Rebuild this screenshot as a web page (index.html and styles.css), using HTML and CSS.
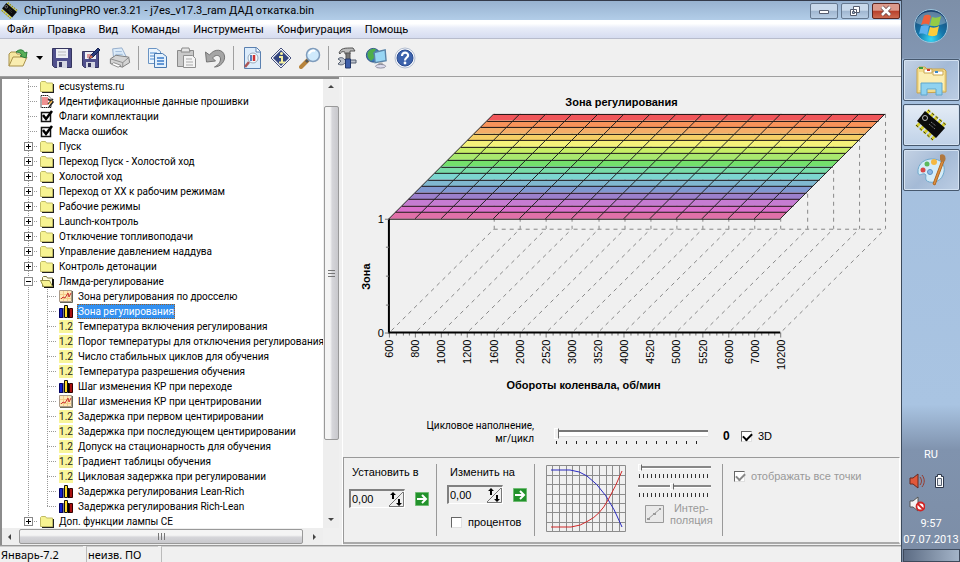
FILE: index.html
```html
<!DOCTYPE html>
<html lang="ru">
<head>
  <meta charset="UTF-8" />
  <meta name="viewport" content="width=device-width, initial-scale=1" />
  <title>ChipTuningPRO ver.3.21</title>
  <link rel="stylesheet" href="styles.css">
</head>
<body>

<svg class="sprite" aria-hidden="true">
  <symbol id="chip" viewBox="0 0 32 32">
    <path d="M12 2l18 15M2 15l17 15" stroke="#d8d02c" stroke-width="5" stroke-dasharray="3 2"/>
    <path d="M13 1l18 15M1 16l17 15" stroke="#333" stroke-width="1" stroke-dasharray="3 2"/>
    <path d="M10 2l20 17-9 10L2 12z" fill="#0b0b0b"/>
    <circle cx="10" cy="9" r="2.500" fill="none" stroke="#bbb"/>
    <path d="M14 15l6 5M16 13l5 4" stroke="#777" stroke-dasharray="2 1"/>
  </symbol>
  <symbol id="folder" viewBox="0 0 14 13">
    <path d="M2 12h12V4" fill="none" stroke="#222" stroke-width="2"/>
    <path d="M.5 11.500v-9l1-1h4l1 1.500h6v8.500z" fill="#f7f392" stroke="#c0bb66"/>
  </symbol>
  <symbol id="folder-open" viewBox="0 0 14 13">
    <path d="M2.500 11.500v-9l1-1h3l1 1.500h5v8.500z" fill="#fffde0" stroke="#77733a"/>
    <path d="M13 4v8.500H4" fill="none" stroke="#111" stroke-width="2"/>
    <path d="M.5 5.500h9l3 6h-9z" fill="#f7f392" stroke="#99944a"/>
  </symbol>
  <symbol id="note" viewBox="0 0 14 13">
    <path d="M1 .5h7l3 3v9H1z" fill="#fff" stroke="#222" stroke-dasharray="1.500 .5"/>
    <path d="M2 3h6M2 5h7M2 7h6M2 9h6" stroke="#d22"/>
    <path d="M8 9l5-5M8 4l5 3-4 5" fill="none" stroke="#222" stroke-width="1.500"/>
    <path d="M9 9l3-3" stroke="#fb4" stroke-width="1.500"/>
  </symbol>
  <symbol id="flag" viewBox="0 0 14 13">
    <path d="M1.500 2.500h9v9h-9z" fill="#fff" stroke="#111" stroke-width="1.500"/>
    <path d="M3 5l3 4 6-8" fill="none" stroke="#000" stroke-width="2.500"/>
  </symbol>
  <symbol id="curve" viewBox="0 0 14 13">
    <path d="M.5.5h12v11H.5z" fill="#fde9b8" stroke="#a98"/>
    <path d="M1 12.500h12.500V1" fill="none" stroke="#665" />
    <path d="M4.500 1v10M8.500 1v10M1 4.500h11M1 8.500h11" stroke="#f2cd8a"/>
    <path d="M2 9l2-2 2 1 3-5 1 4 2-4" fill="none" stroke="#c33"/>
  </symbol>
  <symbol id="bars" viewBox="0 0 14 13">
    <path d="M.5 5.500h3v7h-3zM9.500 4.500h3v8h-3z" fill="#14b" stroke="#001"/>
    <path d="M5.500.5h3v12h-3z" fill="#fd2" stroke="#111"/>
    <path d="M4 3v10M9.500 3v10" stroke="#000"/>
    <path d="M10.500 3.500h3v9h-3z" fill="#a11" stroke="#300"/>
    <path d="M.5 3.500h3v9h-3z" fill="#12c" stroke="#006"/>
  </symbol>
  <symbol id="go" viewBox="0 0 14 14">
    <path d="M.5.5h13v13H.5z" fill="#22922b" stroke="#6fbb72"/>
    <path d="M2 7h9M7 3l4 4-4 4" fill="none" stroke="#fff" stroke-width="2"/>
  </symbol>
  <symbol id="spin" viewBox="0 0 16 16">
    <path d="M1 15L15 1M15.500 1v14.500H1" fill="none" stroke="#777"/>
    <path d="M5 1l3 3H6v4H4V4H2zM11 15l-3-3h2V8h2v4h2z" fill="#000"/>
  </symbol>
</svg>

<div class="window">
  <header class="titlebar">
    <svg class="app-icon"><use href="#chip"/></svg>
    <h1>ChipTuningPRO ver.3.21 - j7es_v17.3_ram ДАД откатка.bin</h1>
    <div class="caption">
      <button aria-label="Свернуть"><svg viewBox="0 0 12 12"><path d="M1.500 5.500h9v3h-9z" fill="#fff" stroke="#555c6e"/></svg></button>
      <button aria-label="Восстановить"><svg viewBox="0 0 12 12"><path d="M4.500 1.500h6v6h-6zM1.500 4.500h6v6h-6z" fill="#fff" stroke="#555c6e"/><path d="M3.500 6.500h2v2h-2z" fill="#9db5d0" stroke="#555c6e"/></svg></button>
      <button class="close" aria-label="Закрыть"><svg viewBox="0 0 12 12"><path d="M2 2l8 8M10 2l-8 8" stroke="#6b4a4a" stroke-width="4"/><path d="M2 2l8 8M10 2l-8 8" stroke="#fff" stroke-width="2.500"/></svg></button>
    </div>
  </header>

  <nav class="menu">
    <a href="#">Файл</a>
    <a href="#">Правка</a>
    <a href="#">Вид</a>
    <a href="#">Команды</a>
    <a href="#">Инструменты</a>
    <a href="#">Конфигурация</a>
    <a href="#">Помощь</a>
  </nav>

  <div class="toolbar">
    <button aria-label="Открыть"><svg viewBox="0 0 22 22"><path d="M2 19V7l2-2h5l1 2h6v3" fill="#f5e7a0" stroke="#a8914a"/><path d="M2 19l4-9h14l-4 9z" fill="#f9edb0" stroke="#a8914a"/><path d="M9 5c3-3 7-3 9 1l2-1-1 6-6-2 2-1c-1-2-3-3-6-3z" fill="#58b058" stroke="#2c7c3c"/></svg></button>
    <button class="drop" aria-label="Последние файлы"><svg viewBox="0 0 8 22"><path d="M0 9h7l-3 4z" fill="#000"/></svg></button>
    <button aria-label="Сохранить"><svg viewBox="0 0 22 22"><path d="M1.500 1.500h19v19h-17l-2-2z" fill="#50508c" stroke="#35355f"/><path d="M5 2h12v9H5z" fill="#eef0f4"/><path d="M7 5h8M7 8h8" stroke="#bbb"/><path d="M6 14h10v7H6z" fill="#d5d7e2"/><path d="M8 15h3v5H8z" fill="#35355f"/></svg></button>
    <button aria-label="Сохранить как"><svg viewBox="0 0 22 22"><path d="M2.500 4.500h16v16h-14l-2-2z" fill="#50508c" stroke="#35355f"/><path d="M5 5h11v7H5z" fill="#eef0f4"/><path d="M7 8h7M7 10h6" stroke="#c44"/><path d="M6 15h9v6H6z" fill="#d5d7e2"/><path d="M8 16h3v4H8z" fill="#35355f"/><path d="M9 12l2-4 7-7 2 2-7 7z" fill="#2b3d7c" stroke="#152050"/><path d="M9 12l2-4 2 2z" fill="#e07050"/></svg></button>
    <button aria-label="Печать"><svg viewBox="0 0 24 24"><path d="M5 12L4 2l10-1 5 10z" fill="#dcecfa" stroke="#8fa9c8"/><path d="M7 5h7M7 8h8" stroke="#9db8d6"/><path d="M1.500 13l6-4 14 2 1 6-8 5-13-4z" fill="#d4d4d4" stroke="#777"/><path d="M2 13l13 4 7-6M15 17v5" fill="none" stroke="#888"/><path d="M5 17l8 3-3 2-7-3z" fill="#fff" stroke="#888"/></svg></button>
    <span class="sep"></span>
    <button aria-label="Копировать"><svg viewBox="0 0 22 22"><path d="M2.500 1.500h8l4 3v12h-12z" fill="#eaf4fd" stroke="#6a94c4"/><path d="M4 6h7M4 9h7M4 12h6" stroke="#4a8ad0"/><path d="M8.500 6.500h8l4 3v11h-12z" fill="#e2f0fc" stroke="#4878b0"/><path d="M11 11h7M11 14h7M11 17h7" stroke="#3a7ac8" stroke-width="1.500"/></svg></button>
    <button aria-label="Вставить"><svg viewBox="0 0 22 22"><path d="M2.500 3.500h16v16h-16z" fill="#c9c9c9" stroke="#8a8a8a"/><path d="M7 1h7l1 4H6z" fill="#e6e6e6" stroke="#888"/><path d="M8.500 8.500h9l3 3v9h-12z" fill="#f4f4f4" stroke="#909090"/><path d="M11 12h6M11 15h7M11 18h7" stroke="#aaa"/></svg></button>
    <button aria-label="Отменить"><svg viewBox="0 0 22 22"><path d="M1.500 5l1 10 9-1-3-3c3-4 8-3 8 1 0 3-2 6-6 8 6 0 11-6 10-11-1-7-10-8-15-1z" fill="#a5a5a5" stroke="#747474"/></svg></button>
    <span class="sep"></span>
    <button aria-label="Просмотр"><svg viewBox="0 0 22 22"><path d="M3.500.5h12l4 4v17h-16z" fill="#dcecfb" stroke="#5a80b0"/><path d="M15 1v4h4" fill="#fff" stroke="#5a80b0"/><circle cx="12" cy="11" r="5" fill="#f4fbff" stroke="#9ab" /><path d="M10 8v6" stroke="#2858a8" stroke-width="1.500"/><path d="M13 8v6" stroke="#c33" stroke-width="2.500"/><path d="M8 15l-4 5" stroke="#a55" stroke-width="2.500"/></svg></button>
    <button aria-label="Сведения"><svg viewBox="0 0 22 22"><path d="M11 1l10 10-10 10L1 11z" fill="#f4f6fa" stroke="#45507c"/><path d="M11 3l8 8-8 8-8-8z" fill="#344680"/><circle cx="11.500" cy="6.500" r="1.500" fill="#f4f0a0"/><path d="M9 10h3v5M9 15.500h6" fill="none" stroke="#f4f0a0" stroke-width="2"/></svg></button>
    <button aria-label="Найти"><svg viewBox="0 0 22 22"><path d="M9 13l-7 7" stroke="#b8843c" stroke-width="4" stroke-linecap="round"/><path d="M9 13l-2 2" stroke="#555" stroke-width="3"/><circle cx="14" cy="8" r="6.500" fill="#cfeafc" stroke="#7f9cbc" stroke-width="1.500"/><path d="M10 7c1-3 4-4 6-3" fill="none" stroke="#fff" stroke-width="2"/></svg></button>
    <span class="sep"></span>
    <button aria-label="Настройки"><svg viewBox="0 0 22 22"><path d="M3 6c2-5 5-5 14-5l2 3h-5v3H9V5c-3-1-4 0-5 2z" fill="#bbb" stroke="#555"/><path d="M10 6h4v7h-4z" fill="#777" stroke="#555"/><path d="M2 12l3 2-3 3c4 2 6 0 7-1h11v-3H9c-2-3-5-3-7-1z" fill="#bcc2cc" stroke="#555f70"/><path d="M9.500 12h5v9h-5z" fill="#3e5ea8" stroke="#22386c"/></svg></button>
    <button aria-label="Подключение"><svg viewBox="0 0 24 24"><circle cx="9" cy="9" r="7.500" fill="#3c78b8" stroke="#285080"/><path d="M3 6c2-4 8-5 9-3l-3 4 2 4-4 4c-3-1-5-5-4-9z" fill="#4fae4a"/><path d="M10 6l12-3 1 12-12 2z" fill="#98d6f4" stroke="#5a84a8" stroke-width="1.500"/><path d="M15 17h4l1 3H14z" fill="#aaa"/><ellipse cx="17" cy="21" rx="5.500" ry="2" fill="#dde" stroke="#889"/></svg></button>
    <button aria-label="Справка"><svg viewBox="0 0 22 22"><circle cx="11" cy="11" r="10" fill="#f6f8fc" stroke="#b4bed0"/><circle cx="11" cy="11" r="8" fill="#3c62ac" stroke="#284a90"/><path d="M8 9c0-5 7-4 6 0-1 2-3 2-3 4.500" fill="none" stroke="#fff" stroke-width="2.200"/><circle cx="11" cy="16" r="1.400" fill="#fff"/></svg></button>
  </div>

  <main>
    <aside class="browser">
      <ul class="tree" id="tree">
        <!-- Tree items inserted here -->
      </ul>
      <div class="vscroll">
        <svg viewBox="0 0 8 8"><path d="M1 5l3-3 3 3z" fill="#444"/></svg>
        <div class="thumb"><i></i></div>
        <svg viewBox="0 0 8 8"><path d="M1 2l3 3 3-3z" fill="#444"/></svg>
      </div>
      <div class="hscroll">
        <svg viewBox="0 0 8 8"><path d="M5 1L2 4l3 3z" fill="#444"/></svg>
        <div class="thumb"><i></i></div>
        <svg viewBox="0 0 8 8"><path d="M2 1l3 3-3 3z" fill="#444"/></svg>
      </div>
    </aside>

    <section class="view">
      <svg class="chart" id="chart" viewBox="0 0 558 330" preserveAspectRatio="xMidYMin meet"></svg>

      <div class="load-row">
        <label for="load">Цикловое наполнение,<br>мг/цикл</label>
        <div class="track">
          <input type="range" id="load" min="0" max="18" value="0">
          <div class="ticks"></div>
        </div>
        <output for="load">0</output>
        <label class="check"><input type="checkbox" checked> 3D</label>
      </div>

      <div class="tools">
        <div class="group set">
          <label for="setValue">Установить в</label>
          <div class="edit">
            <span class="spin"><input type="text" id="setValue" value="0,00"><button aria-label="Больше или меньше"><svg><use href="#spin"/></svg></button></span>
            <button class="go" aria-label="Установить"><svg><use href="#go"/></svg></button>
          </div>
        </div>
        <div class="group change">
          <label for="changeValue">Изменить на</label>
          <div class="edit">
            <span class="spin"><input type="text" id="changeValue" value="0,00"><button aria-label="Больше или меньше"><svg><use href="#spin"/></svg></button></span>
            <button class="go" aria-label="Изменить"><svg><use href="#go"/></svg></button>
          </div>
          <label class="check"><input type="checkbox"> процентов</label>
        </div>
        <div class="group shape">
          <svg class="preview" viewBox="0 0 80 67">
            <path d="M.5.5h79v66H.5zM6.500 0v67M13.500 0v67M20.500 0v67M26.500 0v67M33.500 0v67M40.500 0v67M46.500 0v67M53.500 0v67M60.500 0v67M66.500 0v67M73.500 0v67M0 10.500h80M0 19.500h80M0 29.500h80M0 38.500h80M0 47.500h80M0 57.500h80" fill="none" stroke="#8c8c8c"/>
            <path d="M5 5h19q10 1 17 6 20 14 35 51" fill="none" stroke="#2a2ac0"/>
            <path d="M5 62h20q10-1 17-6 12-6 20-21 8-14 14-29" fill="none" stroke="#d02828"/>
          </svg>
          <div class="smooth">
            <input type="range" aria-label="Степень" min="0" max="17" value="0" disabled>
            <div class="ticks"></div>
            <input type="range" aria-label="Середина" min="0" max="17" value="8" disabled>
            <div class="ticks"></div>
            <button class="interp" disabled>
              <svg viewBox="0 0 19 18"><path d="M.5.5h18v17H.5z" fill="#e9e9e9" stroke="#999"/><path d="M3 14L15 4" stroke="#999"/><path d="M2 13h3v2H2zM8 8h3v2H8zM14 3h2v2h-2z" fill="#999"/></svg>
              <span>Интер-<br>поляция</span>
            </button>
          </div>
        </div>
        <div class="group points">
          <label class="check"><input type="checkbox" checked disabled> отображать все точки</label>
        </div>
      </div>
    </section>
  </main>

  <footer class="status">
    <span>Январь-7.2</span>
    <span>неизв. ПО</span>
    <span></span>
  </footer>
</div>

<aside class="taskbar">
  <button class="start" aria-label="Пуск">
    <svg viewBox="0 0 36 36">
      <defs>
        <radialGradient id="orb" cx="50%" cy="90%" r="85%"><stop offset="0" stop-color="#35d8f4"/><stop offset=".45" stop-color="#1678ac"/><stop offset="1" stop-color="#1c4470"/></radialGradient>
      </defs>
      <circle cx="18" cy="18" r="16.500" fill="url(#orb)" stroke="#9cc4dc"/>
      <path d="M3 15C5 0 31 0 33 15 24 19 12 19 3 15z" fill="#fff" opacity=".3"/>
      <path d="M11 8c3-2 5-1 7 0l-2 9c-3-2-5-1-8 0z" fill="#f0603a"/>
      <path d="M19 9c3 1 6 1 9-1l-2 9c-4 2-7 1-9 0z" fill="#94cc46"/>
      <path d="M8 18c3-1 5-1 8 0l-2 9c-2-1-5-2-8-1z" fill="#5cb0ee"/>
      <path d="M17 19c3 1 6 1 9-1l-2 9c-4 2-7 1-9 0z" fill="#fccc3c"/>
    </svg>
  </button>
  <button class="task" aria-label="Проводник">
    <svg viewBox="0 0 32 32">
      <path d="M2 29V5l2-2h6l2 2h17l2 2v21z" fill="#f3dc8c" stroke="#c9a54e"/>
      <path d="M4 8h25v18H4z" fill="#fbeeb4"/>
      <path d="M9 5h8v4H9zM18 7h10v4H18z" fill="#fff" stroke="#c9a54e"/>
      <path d="M4 3h4v2H4z" fill="#3c9c3c"/><path d="M12 5h3v2h-3z" fill="#d03a2a"/><path d="M20 7h3v2h-3z" fill="#3a8ac8"/>
      <path d="M6 31V19h21v12h-6v-6h-9v6z" fill="#8fd2f0" stroke="#5ea6cc"/>
    </svg>
  </button>
  <button class="task active" aria-label="ChipTuningPRO"><svg><use href="#chip"/></svg></button>
  <button class="task" aria-label="Paint">
    <svg viewBox="0 0 32 32">
      <path d="M3 19C2 9 11 4 19 5c10 1 12 9 9 16-3 8-14 9-17 5-1-3 1-5-1-6-3-1-6 3-7-1z" fill="#d4ecf8" stroke="#6ea8cc"/>
      <circle cx="8" cy="16" r="2.500" fill="#d84848"/><circle cx="12" cy="10" r="2.500" fill="#5cb85c"/><circle cx="19" cy="8" r="3" fill="#f4b840"/><circle cx="15" cy="18" r="2.500" fill="#8ab8e8" stroke="#5a90c0"/>
      <path d="M18 30L27 6l2 1-9 24z" fill="#e09040" stroke="#b06820"/>
      <path d="M25 1c3-2 7 1 5 6l-3 1-2-2z" fill="#b07840"/>
    </svg>
  </button>

  <div class="tray">
    <span class="lang">RU</span>
    <div class="tray-icons">
      <svg viewBox="0 0 16 16"><path d="M1 5h3l5-4v14l-5-4H1z" fill="#e0583a" stroke="#6a2a20"/><path d="M11 4c2 3 2 5 0 8M13 2c3 4 3 8 0 12" fill="none" stroke="#963c30"/></svg>
      <svg viewBox="0 0 16 16"><path d="M3.500 3.500h2v-2h4v2h2v11h-8z" fill="#fff" stroke="#2c3648"/><path d="M5.500 5.500h4v7h-4z" fill="#e8ecf0" stroke="#596273"/></svg>
      <svg viewBox="0 0 16 16"><path d="M1 5h3l5-4v14l-5-4H1z" fill="#f4f4f4" stroke="#555"/><circle cx="11.500" cy="10.500" r="4" fill="#fff" stroke="#d02424" stroke-width="1.800"/><path d="M9 8l5 5" stroke="#d02424" stroke-width="1.800"/></svg>
    </div>
    <time>9:57<br>07.07.2013</time>
  </div>
  <button class="desktop" aria-label="Свернуть все окна"></button>
</aside>

<script>
  const treeData = [
    { icon: "folder", text: "ecusystems.ru" },
    { icon: "note", text: "Идентификационные данные прошивки" },
    { icon: "flag", text: "Флаги комплектации" },
    { icon: "flag", text: "Маска ошибок" },
    { icon: "folder", text: "Пуск", closed: true },
    { icon: "folder", text: "Переход Пуск - Холостой ход", closed: true },
    { icon: "folder", text: "Холостой ход", closed: true },
    { icon: "folder", text: "Переход от ХХ к рабочим режимам", closed: true },
    { icon: "folder", text: "Рабочие режимы", closed: true },
    { icon: "folder", text: "Launch-контроль", closed: true },
    { icon: "folder", text: "Отключение топливоподачи", closed: true },
    { icon: "folder", text: "Управление давлением наддува", closed: true },
    { icon: "folder", text: "Контроль детонации", closed: true },
    { icon: "folder-open", text: "Лямда-регулирование", children: [
      { icon: "curve", text: "Зона регулирования по дросселю" },
      { icon: "bars", text: "Зона регулирования", selected: true },
      { icon: "number", text: "Температура включения регулирования" },
      { icon: "number", text: "Порог температуры для отключения регулирования" },
      { icon: "number", text: "Число стабильных циклов для обучения" },
      { icon: "number", text: "Температура разрешения обучения" },
      { icon: "bars", text: "Шаг изменения КР при переходе" },
      { icon: "curve", text: "Шаг изменения КР при центрировании" },
      { icon: "number", text: "Задержка при первом центирировании" },
      { icon: "number", text: "Задержка при последующем центирировании" },
      { icon: "number", text: "Допуск на стационарность для обучения" },
      { icon: "number", text: "Градиент таблицы обучения" },
      { icon: "number", text: "Цикловая задержка при регулировании" },
      { icon: "bars", text: "Задержка регулирования Lean-Rich" },
      { icon: "bars", text: "Задержка регулирования Rich-Lean" }
    ] },
    { icon: "folder", text: "Доп. функции лампы CE", closed: true }
  ];

  function renderItems(items) {
    return items.map(item => {
      const box = item.closed ? "box plus" : item.children ? "box" : "nobox";
      const icon = item.icon === "number"
        ? '<span class="icon number">1.2</span>'
        : `<svg class="icon"><use href="#${item.icon}"/></svg>`;
      const sub = item.children ? `<ul>${renderItems(item.children)}</ul>` : "";
      return `<li><div class="row"><span class="${box}"></span>${icon}` +
        `<a href="#"${item.selected ? ' class="selected"' : ""}>${item.text}</a></div>${sub}</li>`;
    }).join("");
  }
  document.getElementById("tree").innerHTML = renderItems(treeData);

  // 3D surface
  const rpm = [600, 800, 1000, 1200, 1600, 2000, 2520, 3000, 3520, 4000, 4520, 5000, 5520, 6000, 7000, 10200];
  const colors = ["#f0565a", "#f8935a", "#f4ad68", "#f5cf66", "#f5f27a", "#c8ee66", "#a9e86e", "#74e06c",
    "#78dca8", "#7cd6d0", "#80b8d0", "#8098d0", "#9c80cc", "#c67cd2", "#da70cc", "#e070a8"];
  const left = 46, width = 392, depth = 105, top1 = 141, floor = 255;
  const step = width / (rpm.length - 1);
  const strip = depth / colors.length;
  let out = "";

  rpm.forEach((value, i) => {
    const x = Math.round(left + i * step) + 0.5;
    out += `<path class="dash" d="M${x + depth} ${top1 - depth}V${floor - depth + 1}L${x} ${floor}"/>`;
    out += `<path class="tick" d="M${x} ${floor}v5"/>`;
    if (i < rpm.length - 1) {
      for (let k = 1; k < 4; k++) {
        out += `<path class="tick" d="M${Math.round(x + k * step / 4) + 0.5} ${floor}v3"/>`;
      }
    }
    out += `<text class="num" transform="translate(${x + 4} 262) rotate(-90)" text-anchor="end">${value}</text>`;
  });
  out += `<path class="dash" d="M${left + depth} 151.5h${width}"/>`;

  colors.forEach((color, j) => {
    const y = top1 - depth + j * strip;
    const x = left + depth - j * strip;
    out += `<path d="M${x} ${y}h${width}l${-strip} ${strip}h${-width}z" fill="${color}"/>`;
    out += `<path class="edge" d="M${x} ${Math.round(y) + 0.5}h${width}"/>`;
  });
  rpm.forEach((value, i) => {
    const x = left + i * step;
    out += `<path class="mesh" d="M${x} ${top1}l${depth} ${-depth}"/>`;
  });
  out += `<path class="edge" d="M${left} 141.5h${width}"/>`;
  out += `<path class="axis" d="M${left} 141V255H${left + width}"/>`;
  out += `<path class="tick" d="M42 141.5h4M43 169.500h3M43 198.500h3M43 227.500h3M42 255.500h4"/>`;
  out += `<text class="num" x="41" y="145" text-anchor="end">1</text><text class="num" x="41" y="259" text-anchor="end">0</text>`;
  out += `<text class="name" x="279" y="28" text-anchor="middle">Зона регулирования</text>`;
  out += `<text class="name" x="241" y="312" text-anchor="middle">Обороты коленвала, об/мин</text>`;
  out += `<text class="name" transform="translate(27 199) rotate(-90)" text-anchor="middle">Зона</text>`;
  document.getElementById("chart").innerHTML = out;
</script>

</body>
</html>
```

FILE: styles.css
```css
* {
  box-sizing: border-box;
}
body {
  margin: 0;
  height: 100vh;
  display: flex;
  overflow: hidden;
  background: #f0f0f0;
  color: #000;
  font-family: "Liberation Sans", Arial, sans-serif;
  font-size: 11px;
}
button {
  padding: 0;
  border: 0;
  background: none;
  font: inherit;
}
a {
  color: inherit;
  text-decoration: none;
}
svg {
  display: block;
  flex: none;
}
.sprite {
  position: absolute;
  width: 0;
  height: 0;
}

.window {
  flex: 1;
  min-width: 0;
  display: flex;
  flex-direction: column;
  border-right: 1px solid #3c4a5c;
}
.titlebar {
  height: 20px;
  display: flex;
  align-items: center;
  padding-left: 1px;
  border-top: 1px solid #343a4a;
  background: linear-gradient(#98b2d0, #b2cde8);
}
.app-icon {
  width: 17px;
  height: 17px;
}
h1 {
  flex: 1;
  margin: 0 0 0 6px;
  font-family: Roboto, sans-serif;
  font-size: 11px;
  line-height: 18px;
  font-weight: normal;
}
.caption {
  display: flex;
  gap: 3px;
  padding-right: 1px;
}
.caption button {
  width: 28px;
  height: 16px;
  display: grid;
  place-items: center;
  border: 1px solid #65788f;
  border-radius: 2px;
  background: linear-gradient(#c8d8ea 45%, #9fb6d0 50%, #b8cde4);
}
.caption svg {
  width: 12px;
  height: 12px;
}
.caption .close {
  border-color: #5c2620;
  background: linear-gradient(#dc9a8c 45%, #b8402c 50%, #cc6a50);
}

.menu {
  height: 19px;
  display: flex;
  gap: 13px;
  padding-left: 7px;
  background: linear-gradient(#fff 20%, #e8ecf8 45%, #d6dcf0);
  border-bottom: 1px solid #b8bccc;
  font-family: Roboto, sans-serif;
  font-size: 11px;
  line-height: 20px;
}
.toolbar {
  height: 38px;
  display: flex;
  align-items: center;
  gap: 7px;
  padding-left: 7px;
  border-bottom: 1px solid #a0a0a0;
}
.toolbar button svg {
  width: 22px;
  height: 22px;
}
.toolbar .drop svg {
  width: 8px;
}
.sep {
  width: 1px;
  height: 24px;
  background: #a0a0a0;
}

main {
  flex: 1;
  min-height: 0;
  display: flex;
  gap: 3px;
}
.browser {
  width: 339px;
  display: grid;
  grid-template-columns: 1fr 16px;
  grid-template-rows: 1fr 17px;
  border-left: 2px solid #8c8c8c;
  border-top: 2px solid #8c8c8c;
  background: #f0f0f0;
}
ul {
  margin: 0;
  padding: 0;
  list-style: none;
  background: repeating-linear-gradient(#999 0 1px, transparent 1px 2px) no-repeat;
}
.tree {
  min-width: 0;
  min-height: 0;
  overflow: hidden;
  padding-left: 22px;
  background-color: #fff;
  background-size: 1px calc(100% - 7px);
  background-position: 26px 0;
  font-family: Roboto, sans-serif;
  font-size: 10px;
  white-space: nowrap;
}
.tree ul {
  padding-left: 19px;
  background-size: 1px calc(100% - 7px);
  background-position: 23px 0;
}
.row {
  height: 15px;
  display: flex;
  align-items: center;
  background: repeating-linear-gradient(90deg, #999 0 1px, transparent 1px 2px) no-repeat 4px 7px / 10px 1px;
}
.icon {
  flex: none;
  width: 14px;
  height: 13px;
  margin: 0 4px 0 7px;
}
.number {
  background: #f8f59a;
  color: #222;
  line-height: 13px;
  text-align: center;
}
.row a {
  padding: 0 1px;
  line-height: 15px;
}
.row .selected {
  background: #3390f0;
  color: #fff;
  outline: 1px dotted #a06020;
  outline-offset: -1px;
}
.nobox, .box {
  flex: none;
  width: 9px;
}
.box {
  height: 9px;
  border: 1px solid #888;
  background: linear-gradient(#000, #000) no-repeat center / 5px 1px #fff;
}
.plus {
  background: linear-gradient(#000, #000) no-repeat center / 5px 1px, linear-gradient(#000, #000) no-repeat center / 1px 5px #fff;
}

.vscroll, .hscroll {
  display: flex;
  align-items: center;
  background: #eee;
}
.vscroll {
  flex-direction: column;
  padding: 4px 0;
}
.vscroll svg, .hscroll svg {
  width: 8px;
  height: 8px;
}
.thumb {
  display: grid;
  place-items: center;
  border: 1px solid #999;
  border-radius: 2px;
}
.vscroll .thumb {
  width: 15px;
  flex: 1;
  margin: 15px 0 76px;
  background: linear-gradient(90deg, #f4f4f4 40%, #d6d6da 55%, #c8c8cc);
}
.hscroll .thumb {
  height: 15px;
  flex: 1;
  margin: 0 8px 0 5px;
  background: linear-gradient(#f4f4f4 40%, #d6d6da 55%, #c8c8cc);
}
.hscroll {
  padding: 0 4px;
}
.thumb i {
  width: 7px;
  height: 7px;
  background: repeating-linear-gradient(90deg, #777 0 1px, transparent 1px 3px);
}
.vscroll .thumb i {
  background: repeating-linear-gradient(#777 0 1px, transparent 1px 3px);
}

.view {
  flex: 1;
  min-width: 0;
  display: flex;
  flex-direction: column;
  padding: 1px 1px 1px 0;
  border-left: 1px solid #fff;
}
.chart {
  flex: 1;
  min-height: 0;
  width: 100%;
}
.chart text {
  font-family: "Liberation Sans", Arial, sans-serif;
  font-size: 11px;
}
.chart .name {
  font-weight: bold;
}
.chart path {
  stroke-width: 1;
}
.dash {
  fill: none;
  stroke: #888;
  stroke-dasharray: 4 4;
}
.tick {
  stroke: #777;
}
.edge {
  stroke: #1c1414;
}
.mesh {
  stroke: #222;
}
.chart .axis {
  fill: none;
  stroke: #000;
  stroke-width: 2;
}

.load-row {
  height: 42px;
  display: flex;
  align-items: center;
  padding-left: 80px;
}
.load-row label:first-child {
  width: 111px;
  margin: 0 20px 8px 0;
  font-family: Roboto, sans-serif;
  font-size: 10px;
  line-height: 13px;
  text-align: right;
  white-space: nowrap;
}
.track {
  width: 154px;
}
input[type="range"] {
  appearance: none;
  display: block;
  width: 100%;
  height: 11px;
  margin: 0;
  background: linear-gradient(#777 0 2px, #fff 2px 6px, #ddd 6px 7px) no-repeat 0 2px / 100% 7px;
}
input[type="range"]::-webkit-slider-thumb {
  appearance: none;
  width: 5px;
  height: 11px;
  border: 1px solid #fff;
  border-right-color: #666;
  background: #f0f0f0;
}
.ticks {
  height: 3px;
  margin: 2px 2px 0;
  background: repeating-linear-gradient(90deg, #222 0 1px, transparent 1px 10px);
}
output {
  margin-left: 15px;
  width: 18px;
  font-size: 12px;
  font-weight: bold;
}
.check {
  display: flex;
  align-items: center;
  gap: 6px;
}
input[type="checkbox"] {
  appearance: none;
  flex: none;
  width: 11px;
  height: 11px;
  margin: 0;
  border: 1px solid #e0e0e0;
  border-top-color: #666;
  border-left-color: #666;
  background: #fff;
}
input[type="checkbox"]:checked::before {
  content: "";
  display: block;
  width: 7px;
  height: 4px;
  margin: 1px;
  border-left: 2px solid #000;
  border-bottom: 2px solid #000;
  transform: rotate(-45deg);
}

.tools {
  height: 87px;
  display: flex;
  padding: 6px 0;
  border: 1px solid #999;
  border-right-color: #fff;
  border-bottom: 2px solid #aaa;
}
.group {
  border-right: 1px solid #999;
  padding-left: 11px;
}
.group > label:first-child {
  line-height: 16px;
}
.set {
  width: 93px;
  padding-left: 5px;
}
.set > label:first-child, .change > label:first-child {
  display: block;
  padding-left: 3px;
}
.set .edit {
  margin-top: 9px;
}
.change {
  width: 98px;
  padding-left: 10px;
}
.change .edit {
  margin-top: 5px;
}
.change .check {
  margin: 12px 0 0 4px;
}
.edit {
  display: flex;
  align-items: center;
  gap: 10px;
}
.spin {
  display: flex;
  width: 56px;
  height: 19px;
  border: 2px solid #808080;
  border-right: 1px solid #fff;
  border-bottom: 1px solid #fff;
}
.spin input {
  flex: 1;
  min-width: 0;
  padding: 0 1px;
  border: 0;
  background: #f0f0f0;
  font: inherit;
}
.spin svg {
  width: 16px;
  height: 16px;
}
.go svg {
  width: 14px;
  height: 14px;
}
.shape {
  width: 188px;
  display: flex;
  gap: 12px;
}
.preview {
  width: 80px;
  height: 67px;
  margin-top: 1px;
}
.smooth {
  width: 73px;
}
.smooth input[type="range"] {
  height: 7px;
  background: linear-gradient(#888 0 2px, #fff 2px 3px) no-repeat 0 2px / 100% 3px;
}
.smooth input[type="range"]::-webkit-slider-thumb {
  width: 4px;
  height: 7px;
}
.smooth .ticks {
  height: 4px;
  margin: 3px 1px 5px;
  background: repeating-linear-gradient(90deg, #333 0 1px, transparent 1px 4px);
}
.interp {
  display: flex;
  gap: 6px;
  align-items: center;
  margin: 5px 0 0 7px;
  line-height: 12px;
  color: #999;
}
.interp svg {
  width: 19px;
  height: 18px;
}
.points {
  border: 0;
  color: #999;
}
.points .check {
  margin-top: 4px;
}
.points input:checked::before {
  border-color: #888;
}

.status {
  height: 17px;
  display: flex;
  gap: 3px;
  border-top: 1px solid #999;
  font-family: "Noto Sans", sans-serif;
  line-height: 15px;
}
.status span {
  width: 72px;
  padding-left: 1px;
  border-top: 1px solid #ccc;
  border-left: 1px solid #bbb;
}
.status span:first-child {
  width: 83px;
  border-left: 0;
}
.status span:last-child {
  flex: 1;
}

.taskbar {
  width: 58px;
  display: flex;
  flex-direction: column;
  align-items: center;
  background: linear-gradient(#7d8fa8, #8296b2 58px, #a4bfde 60px, #a9c4e2 72%, #8093ae 80%, #7c8da6);
}
.start {
  margin: 8px 0 15px;
}
.start svg {
  width: 36px;
  height: 36px;
}
.task {
  width: 57px;
  height: 42px;
  margin-bottom: 3px;
  display: grid;
  place-items: center;
  border: 1px solid #46586e;
  border-radius: 2px;
  box-shadow: inset 0 0 0 1px #d4e2f2;
  background: linear-gradient(135deg, #c4d2e4, #a4bad6 50%, #bccee4);
}
.task.active {
  background: linear-gradient(#e4ecf6, #c0d2e8);
}
.task svg {
  width: 32px;
  height: 32px;
}
.tray {
  margin-top: auto;
  color: #fff;
  font-family: Roboto, sans-serif;
  text-align: center;
}
.lang {
  display: block;
  line-height: 14px;
}
.tray-icons {
  display: grid;
  grid-template-columns: 16px 16px;
  gap: 7px;
  margin: 11px 0 4px 6px;
}
.tray-icons svg {
  width: 16px;
  height: 16px;
}
time {
  display: block;
  line-height: 16px;
}
.desktop {
  width: 57px;
  height: 13px;
  margin-top: 1px;
  border: 1px solid #3e4a5c;
  background: linear-gradient(90deg, #5c6c84, #a4b4c8);
}
```
